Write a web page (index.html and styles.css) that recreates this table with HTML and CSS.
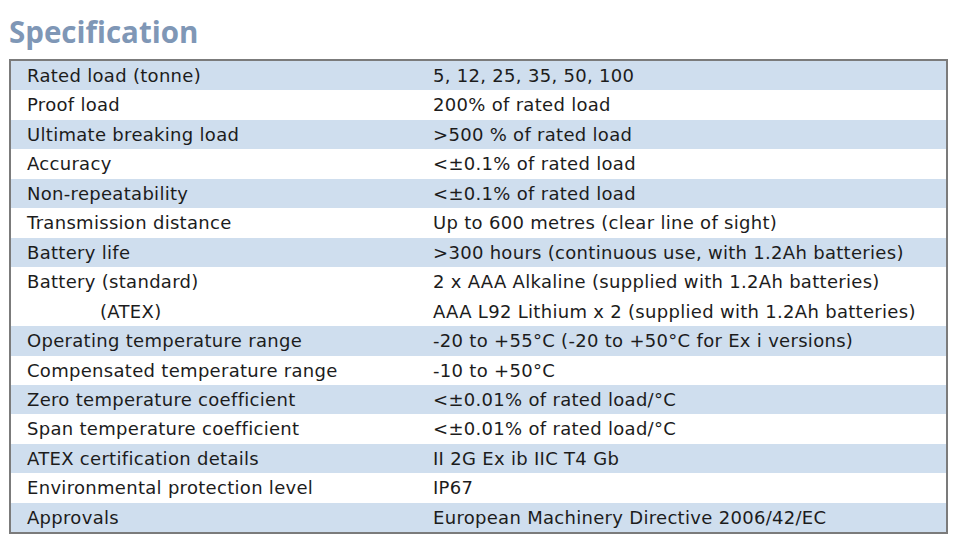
FILE: index.html
```html
<!DOCTYPE html>
<html>
<head>
<meta charset="utf-8">
<link rel="stylesheet" href="styles.css">
</head>
<body>
<h1 class="title">Specification</h1>
<table class="spec">
<tr class="alt"><td>Rated load (tonne)</td><td>5, 12, 25, 35, 50, 100</td></tr>
<tr><td>Proof load</td><td>200% of rated load</td></tr>
<tr class="alt"><td>Ultimate breaking load</td><td>&gt;500 % of rated load</td></tr>
<tr><td>Accuracy</td><td>&lt;±0.1% of rated load</td></tr>
<tr class="alt"><td>Non-repeatability</td><td>&lt;±0.1% of rated load</td></tr>
<tr><td>Transmission distance</td><td>Up to 600 metres (clear line of sight)</td></tr>
<tr class="alt"><td>Battery life</td><td>&gt;300 hours (continuous use, with 1.2Ah batteries)</td></tr>
<tr><td>Battery (standard)<br><span class="indent">(ATEX)</span></td><td>2 x AAA Alkaline (supplied with 1.2Ah batteries)<br>AAA L92 Lithium x 2 (supplied with 1.2Ah batteries)</td></tr>
<tr class="alt"><td>Operating temperature range</td><td>-20 to +55°C (-20 to +50°C for Ex i versions)</td></tr>
<tr><td>Compensated temperature range</td><td>-10 to +50°C</td></tr>
<tr class="alt"><td>Zero temperature coefficient</td><td>&lt;±0.01% of rated load/°C</td></tr>
<tr><td>Span temperature coefficient</td><td>&lt;±0.01% of rated load/°C</td></tr>
<tr class="alt"><td>ATEX certification details</td><td>II 2G Ex ib IIC T4 Gb</td></tr>
<tr><td>Environmental protection level</td><td>IP67</td></tr>
<tr class="alt"><td>Approvals</td><td>European Machinery Directive 2006/42/EC</td></tr>
</table>
</body>
</html>
```
FILE: styles.css
```css
html, body {
  margin: 0;
  padding: 0;
  background: #ffffff;
}
body {
  padding: 12px 0 0 9px;
  font-family: "DejaVu Sans", "Liberation Sans", sans-serif;
  color: #1c1c1c;
}
.title {
  margin: 0 0 7px 0;
  font-family: "Open Sans", "Liberation Sans", sans-serif;
  font-size: 29.5px;
  line-height: 40px;
  font-weight: 700;
  color: #7f97b6;
}
.spec {
  border-collapse: collapse;
  border: 2px solid #7b7b7b;
  width: 939px;
  font-size: 18px;
  letter-spacing: 0.3px;
}
.spec td {
  padding: 0;
  line-height: 29.45px;
  vertical-align: top;
}
.spec td:first-child {
  width: 406px;
  padding-left: 16px;
}
.spec tr.alt {
  background: #cfdeee;
}
.indent {
  padding-left: 73px;
}
```
